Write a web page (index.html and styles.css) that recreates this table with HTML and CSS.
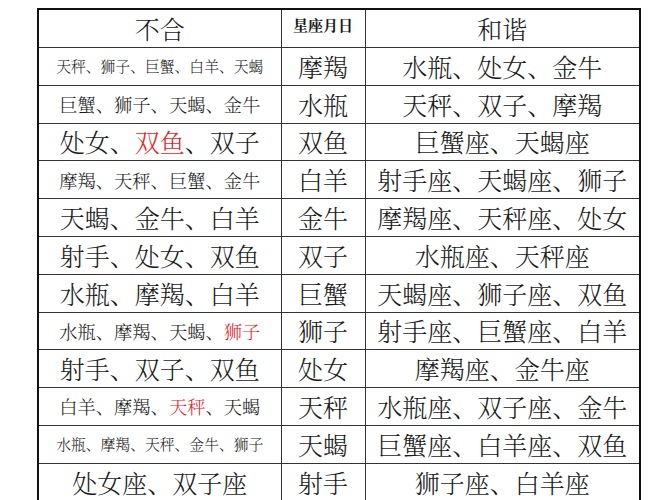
FILE: index.html
```html
<!DOCTYPE html>
<html lang="zh">
<head>
<meta charset="utf-8">
<link rel="stylesheet" href="styles.css">
</head>
<body>
<table class="zodiac">
  <colgroup>
    <col class="c1"><col class="c2"><col class="c3">
  </colgroup>
  <thead>
    <tr>
      <th class="big">不合</th>
      <th class="mid-head">星座月日</th>
      <th class="big">和谐</th>
    </tr>
  </thead>
  <tbody>
    <tr><td class="xs">天秤、狮子、巨蟹、白羊、天蝎</td><td class="big">摩羯</td><td class="big">水瓶、处女、金牛</td></tr>
    <tr><td class="sm">巨蟹、狮子、天蝎、金牛</td><td class="big">水瓶</td><td class="big">天秤、双子、摩羯</td></tr>
    <tr><td class="big">处女、<span class="red">双鱼</span>、双子</td><td class="big">双鱼</td><td class="big">巨蟹座、天蝎座</td></tr>
    <tr><td class="sm">摩羯、天秤、巨蟹、金牛</td><td class="big">白羊</td><td class="big">射手座、天蝎座、狮子</td></tr>
    <tr><td class="big">天蝎、金牛、白羊</td><td class="big">金牛</td><td class="big">摩羯座、天秤座、处女</td></tr>
    <tr><td class="big">射手、处女、双鱼</td><td class="big">双子</td><td class="big">水瓶座、天秤座</td></tr>
    <tr><td class="big">水瓶、摩羯、白羊</td><td class="big">巨蟹</td><td class="big">天蝎座、狮子座、双鱼</td></tr>
    <tr><td class="sm">水瓶、摩羯、天蝎、<span class="red">狮子</span></td><td class="big">狮子</td><td class="big">射手座、巨蟹座、白羊</td></tr>
    <tr><td class="big">射手、双子、双鱼</td><td class="big">处女</td><td class="big">摩羯座、金牛座</td></tr>
    <tr><td class="sm">白羊、摩羯、<span class="red">天秤</span>、天蝎</td><td class="big">天秤</td><td class="big">水瓶座、双子座、金牛</td></tr>
    <tr><td class="xs">水瓶、摩羯、天秤、金牛、狮子</td><td class="big">天蝎</td><td class="big">巨蟹座、白羊座、双鱼</td></tr>
    <tr><td class="big">处女座、双子座</td><td class="big">射手</td><td class="big">狮子座、白羊座</td></tr>
  </tbody>
</table>
</body>
</html>
```
FILE: styles.css
```css
html, body {
  margin: 0;
  padding: 0;
  background: #ffffff;
}
body {
  padding: 8px 0 0 37px;
  font-family: "Noto Serif CJK SC", "Noto Sans CJK SC", serif;
  color: #1a1a1a;
}
.zodiac {
  border-collapse: collapse;
  table-layout: fixed;
  width: 602px;
  border: 2px solid #111;
}
.c1 { width: 243px; }
.c2 { width: 84px; }
.c3 { width: 275px; }
.zodiac th,
.zodiac td {
  border: 1px solid #333;
  height: 36.8px;
  padding: 0;
  text-align: center;
  vertical-align: middle;
  font-weight: 300;
  white-space: nowrap;
  line-height: 1;
}
.big { font-size: 25px; }
.sm { font-size: 18.3px; }
.xs { font-size: 14.8px; }
.zodiac .mid-head {
  font-size: 15px;
  font-weight: 700;
  vertical-align: top;
  padding-top: 7px;
  height: 30px;
}
.red { color: #e3262b; }
```
